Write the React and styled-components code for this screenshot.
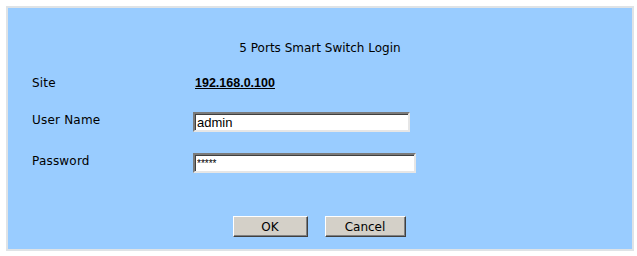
import React from "react";
import styled, { createGlobalStyle } from "styled-components";

const GlobalStyle = createGlobalStyle`
  html, body {
    margin: 0;
    padding: 0;
    background: #ffffff;
  }
`;

const Panel = styled.form`
  box-sizing: border-box;
  width: 628px;
  height: 245px;
  margin: 6px 0 0 6px;
  border: 2px solid #dfe3e6;
  background-color: #99ccff;
  font-family: "DejaVu Sans", Verdana, sans-serif;
  font-size: 12px;
  color: #000;
  display: flex;
  flex-direction: column;
`;

const Title = styled.div`
  text-align: center;
  margin-top: 33px;
  height: 14px;
  line-height: 14px;
`;

const Grid = styled.div`
  display: grid;
  grid-template-columns: 161px auto;
  grid-template-rows: 15px 20px 20px;
  align-items: center;
  padding-left: 24px;
  margin-top: 21px;
  row-gap: 21px;
`;

const Label = styled.div`
  line-height: 15px;
  letter-spacing: 0.2px;
  margin-top: ${props => props.$shift || 0}px;
`;

const Address = styled.div`
  font-family: "Liberation Sans", Arial, sans-serif;
  font-weight: bold;
  font-size: 12.5px;
  text-decoration: underline;
  line-height: 15px;
  margin-left: 2px;
`;

const TextInput = styled.input`
  box-sizing: border-box;
  display: block;
  width: ${props => props.$width}px;
  height: 20px;
  margin: 0;
  padding: 0 2px;
  background: #fff;
  border: 2px solid;
  border-color: #7a7a7a #e6e6e6 #e6e6e6 #7a7a7a;
  box-shadow: inset 1px 1px 0 #404040;
  font-family: "Liberation Sans", Arial, sans-serif;
  font-size: ${props => props.$size || 13}px;
  color: #000;
  outline: none;
`;

const Buttons = styled.div`
  display: flex;
  justify-content: center;
  gap: 17px;
  margin-top: auto;
  margin-bottom: 12px;
  padding-right: 2px;
`;

const Button = styled.button`
  box-sizing: border-box;
  width: ${props => props.$width}px;
  height: 21px;
  padding: 0;
  background: #d4d0c8;
  border: 1px solid;
  border-color: #ffffff #404040 #404040 #ffffff;
  box-shadow: inset -1px -1px 0 #808080;
  font-family: "DejaVu Sans", Verdana, sans-serif;
  font-size: 12px;
  color: #000;
`;

export default function App() {
  return (
    <>
      <GlobalStyle />
      <Panel onSubmit={e => e.preventDefault()}>
        <Title>5 Ports Smart Switch Login</Title>
        <Grid>
          <Label>Site</Label>
          <Address>192.168.0.100</Address>
          <Label $shift={-3}>User Name</Label>
          <TextInput $width={217} defaultValue="admin" />
          <Label $shift={-3}>Password</Label>
          <TextInput $width={223} $size={10} defaultValue="*****" />
        </Grid>
        <Buttons>
          <Button type="button" $width={75}>OK</Button>
          <Button type="button" $width={81}>Cancel</Button>
        </Buttons>
      </Panel>
    </>
  );
}
